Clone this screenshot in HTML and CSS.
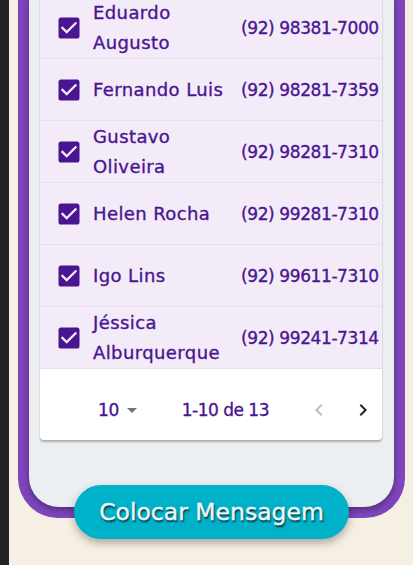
FILE: index.html
```html
<!DOCTYPE html>
<html lang="pt">
<head>
<meta charset="utf-8">
<title>Contatos</title>
<link rel="stylesheet" href="styles.css">
</head>
<body>
<div class="side"></div>
<main class="main">
  <section class="frame">
    <div class="panel">
      <div class="card">
        <div class="row">
          <svg class="check" viewBox="0 0 24 24"><path d="M19 3H5c-1.11 0-2 .9-2 2v14c0 1.1.89 2 2 2h14c1.11 0 2-.9 2-2V5c0-1.1-.89-2-2-2zm-9 14l-5-5 1.41-1.41L10 14.17l7.59-7.59L19 8l-9 9z"/></svg>
          <div class="name"><span class="word">Eduardo</span> <span class="word">Augusto</span></div>
          <div class="phone">(92) 98381-7000</div>
        </div>
        <div class="row">
          <svg class="check" viewBox="0 0 24 24"><path d="M19 3H5c-1.11 0-2 .9-2 2v14c0 1.1.89 2 2 2h14c1.11 0 2-.9 2-2V5c0-1.1-.89-2-2-2zm-9 14l-5-5 1.41-1.41L10 14.17l7.59-7.59L19 8l-9 9z"/></svg>
          <div class="name">Fernando Luis</div>
          <div class="phone">(92) 98281-7359</div>
        </div>
        <div class="row">
          <svg class="check" viewBox="0 0 24 24"><path d="M19 3H5c-1.11 0-2 .9-2 2v14c0 1.1.89 2 2 2h14c1.11 0 2-.9 2-2V5c0-1.1-.89-2-2-2zm-9 14l-5-5 1.41-1.41L10 14.17l7.59-7.59L19 8l-9 9z"/></svg>
          <div class="name"><span class="word">Gustavo</span> <span class="word">Oliveira</span></div>
          <div class="phone">(92) 98281-7310</div>
        </div>
        <div class="row">
          <svg class="check" viewBox="0 0 24 24"><path d="M19 3H5c-1.11 0-2 .9-2 2v14c0 1.1.89 2 2 2h14c1.11 0 2-.9 2-2V5c0-1.1-.89-2-2-2zm-9 14l-5-5 1.41-1.41L10 14.17l7.59-7.59L19 8l-9 9z"/></svg>
          <div class="name">Helen Rocha</div>
          <div class="phone">(92) 99281-7310</div>
        </div>
        <div class="row">
          <svg class="check" viewBox="0 0 24 24"><path d="M19 3H5c-1.11 0-2 .9-2 2v14c0 1.1.89 2 2 2h14c1.11 0 2-.9 2-2V5c0-1.1-.89-2-2-2zm-9 14l-5-5 1.41-1.41L10 14.17l7.59-7.59L19 8l-9 9z"/></svg>
          <div class="name">Igo Lins</div>
          <div class="phone">(92) 99611-7310</div>
        </div>
        <div class="row">
          <svg class="check" viewBox="0 0 24 24"><path d="M19 3H5c-1.11 0-2 .9-2 2v14c0 1.1.89 2 2 2h14c1.11 0 2-.9 2-2V5c0-1.1-.89-2-2-2zm-9 14l-5-5 1.41-1.41L10 14.17l7.59-7.59L19 8l-9 9z"/></svg>
          <div class="name"><span class="word">Jéssica</span> <span class="word">Alburquerque</span></div>
          <div class="phone">(92) 99241-7314</div>
        </div>
        <div class="pager">
          <div class="select">
            <span class="rows">10</span>
            <svg class="drop" viewBox="0 0 24 24"><path d="M7 10l5 5 5-5z"/></svg>
          </div>
          <span class="range">1-10 de 13</span>
          <svg class="nav prev" viewBox="0 0 24 24"><path d="M15.41 7.41 14 6l-6 6 6 6 1.41-1.41L10.83 12z"/></svg>
          <svg class="nav next" viewBox="0 0 24 24"><path d="M10 6 8.59 7.41 13.17 12l-4.58 4.59L10 18l6-6z"/></svg>
        </div>
      </div>
    </div>
  </section>
  <button class="action" type="button">Colocar Mensagem</button>
</main>
</body>
</html>
```

FILE: styles.css
```css
html, body {
  margin: 0;
  padding: 0;
  height: 100%;
}

body {
  display: flex;
  background: #f6f0e4;
  overflow: hidden;
  font-family: "DejaVu Sans", "Liberation Sans", sans-serif;
  color: #4a1592;
}

.side {
  width: 9px;
  flex-shrink: 0;
  background: #232323;
}

.main {
  flex: 1;
  display: flex;
  flex-direction: column;
  align-items: flex-start;
  padding: 0 8px 0 9px;
}

.frame {
  width: 387px;
  box-sizing: border-box;
  margin-top: -3px;
  padding: 0 11px 11px;
  background: #7e45bc;
  border-radius: 0 0 40px 40px;
}

.panel {
  background: #eceff1;
  border-radius: 0 0 30px 30px;
  padding: 0 12px 67px 11px;
  box-shadow: 0 3px 6px rgba(0, 0, 0, 0.35);
}

.card {
  background: #ffffff;
  border-radius: 0 0 4px 4px;
  box-shadow: 0 2px 2px rgba(0, 0, 0, 0.28);
  overflow: hidden;
  -webkit-text-stroke: 0.35px currentColor;
}

.row {
  height: 61px;
  display: flex;
  align-items: center;
  background: #f3ebf8;
  border-bottom: 1px solid #e7e0ec;
  padding-left: 15px;
}

.check {
  width: 28px;
  height: 28px;
  flex-shrink: 0;
  fill: #4a1592;
}

.name {
  width: 148px;
  flex-shrink: 0;
  margin-left: 10px;
  font-size: 18px;
  letter-spacing: 0.4px;
  line-height: 30px;
}

.word {
  display: inline-block;
}

.phone {
  font-size: 17px;
  letter-spacing: -0.4px;
  white-space: nowrap;
}

.pager {
  height: 60px;
  padding-top: 11px;
  display: flex;
  align-items: center;
  justify-content: flex-end;
  padding-right: 7px;
  font-size: 17px;
}

.select {
  display: flex;
  align-items: center;
}

.rows {
  letter-spacing: -0.5px;
}

.drop {
  width: 24px;
  height: 24px;
  margin-left: 1px;
  fill: #757575;
}

.range {
  margin-left: 38px;
  letter-spacing: -0.5px;
}

.nav {
  width: 24px;
  height: 24px;
}

.prev {
  margin-left: 38px;
  fill: #bdbdbd;
}

.next {
  margin-left: 20px;
  fill: #222222;
}

.action {
  margin: -33px 0 0 56px;
  width: 275px;
  height: 54px;
  border: none;
  border-radius: 27px;
  background: #00b1ca;
  box-shadow: 0 4px 8px rgba(0, 0, 0, 0.3);
  font-family: "DejaVu Sans", "Liberation Sans", sans-serif;
  font-size: 23.5px;
  color: #eef6f8;
  -webkit-text-stroke: 0.4px #eef6f8;
  text-shadow: 1px 2px 2px rgba(0, 0, 0, 0.75);
  padding: 0;
  cursor: pointer;
}
```
